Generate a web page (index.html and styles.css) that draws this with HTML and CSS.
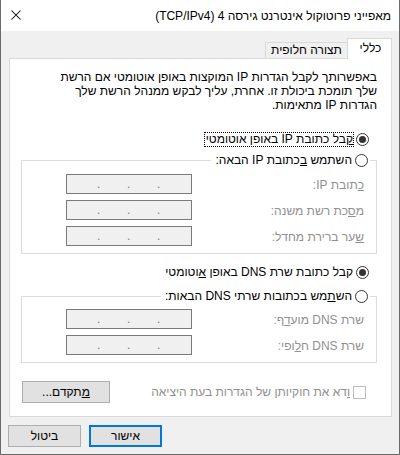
FILE: index.html
```html
<!DOCTYPE html>
<html lang="he" dir="rtl">
<head>
<meta charset="utf-8">
<title>TCP/IPv4</title>
<link rel="stylesheet" href="styles.css">
</head>
<body>
<div class="window">
  <div class="titlebar">
    <span class="title">מאפייני פרוטוקול אינטרנט גירסה 4 (TCP/IPv4)</span>
    <svg class="close" width="10" height="10" viewBox="0 0 10 10" aria-hidden="true"><path d="M0.5 0.5L9.5 9.5M9.5 0.5L0.5 9.5" stroke="#000" stroke-width="1.05" fill="none"/></svg>
  </div>
  <div class="tabs">
    <div class="tab active">כללי</div>
    <div class="tab">תצורה חלופית</div>
  </div>
  <div class="panel">
    <p class="intro">באפשרותך לקבל הגדרות IP המוקצות באופן אוטומטי אם הרשת<br>שלך תומכת ביכולת זו. אחרת, עליך לבקש ממנהל הרשת שלך<br>הגדרות IP מתאימות.</p>

    <div class="radio-row first">
      <span class="radio checked"></span>
      <span class="lbl focus"><u>ק</u>בל כתובת IP באופן אוטומטי</span>
    </div>

    <fieldset class="group ip-group">
      <legend>
        <span class="radio"></span>
        <span class="lbl">השתמש <u>ב</u>כתובת IP הבאה:</span>
      </legend>
      <div class="field-row">
        <span class="flabel"><u>כ</u>תובת IP:</span>
        <span class="ipbox"><span>.</span><span>.</span><span>.</span></span>
      </div>
      <div class="field-row">
        <span class="flabel">מ<u>ס</u>כת רשת משנה:</span>
        <span class="ipbox"><span>.</span><span>.</span><span>.</span></span>
      </div>
      <div class="field-row">
        <span class="flabel"><u>ש</u>ער ברירת מחדל:</span>
        <span class="ipbox"><span>.</span><span>.</span><span>.</span></span>
      </div>
    </fieldset>

    <div class="radio-row dns-auto">
      <span class="radio checked"></span>
      <span class="lbl">קבל כתובת שרת DNS באופן <u>א</u>וטומטי</span>
    </div>

    <fieldset class="group dns-group">
      <legend>
        <span class="radio"></span>
        <span class="lbl">הש<u>ת</u>מש בכתובות שרתי DNS הבאות:</span>
      </legend>
      <div class="field-row">
        <span class="flabel">שרת DNS מוע<u>ד</u>ף:</span>
        <span class="ipbox"><span>.</span><span>.</span><span>.</span></span>
      </div>
      <div class="field-row">
        <span class="flabel">שרת DNS ח<u>ל</u>ופי:</span>
        <span class="ipbox"><span>.</span><span>.</span><span>.</span></span>
      </div>
    </fieldset>

    <div class="bottom-row">
      <span class="check-wrap">
        <span class="checkbox"></span>
        <span class="check-lbl"><u>ו</u>דא את חוקיותן של הגדרות בעת היציאה</span>
      </span>
      <button class="btn adv"><u>מ</u>תקדם...</button>
    </div>
  </div>
  <div class="buttons">
    <button class="btn default">אישור</button>
    <button class="btn">ביטול</button>
  </div>
</div>
</body>
</html>
```

FILE: styles.css
```css
* { box-sizing: border-box; }

html, body {
  margin: 0;
  padding: 0;
}

body {
  width: 400px;
  height: 455px;
  overflow: hidden;
  font-family: "Liberation Sans", "DejaVu Sans", Arial, sans-serif;
  font-size: 12px;
  color: #000;
  background: #f0f0f0;
}

.window {
  width: 400px;
  height: 455px;
  direction: rtl;
  background: #f0f0f0;
  border: 1px solid #6b6b6b;
  border-top: none;
  display: flex;
  flex-direction: column;
}

.titlebar {
  height: 31px;
  background: #fff;
  display: flex;
  align-items: center;
  justify-content: space-between;
  padding: 0 8px 0 10px;
  flex: none;
}

.title {
  font-size: 12px;
  line-height: 16px;
  padding-top: 1px;
}

.close {
  display: block;
  margin-top: -1px;
}

.tabs {
  display: flex;
  align-items: flex-end;
  height: 20px;
  margin-top: 7px;
  padding-right: 7px;
  position: relative;
  z-index: 1;
  flex: none;
}

.tab {
  height: 16px;
  width: 82px;
  border: 1px solid #d9d9d9;
  border-bottom: none;
  border-right: none;
  background: #f0f0f0;
  text-align: center;
  line-height: 15px;
}

.tab.active {
  height: 21px;
  width: 45px;
  margin-bottom: -1px;
  background: #fff;
  border-right: 1px solid #d9d9d9;
  line-height: 19px;
  padding-left: 2px;
}

.panel {
  height: 359px;
  margin: 0 7px 0 8px;
  background: #fff;
  border: 1px solid #d9d9d9;
  padding: 11px 14px 0 0;
  display: flex;
  flex-direction: column;
  flex: none;
}

.intro {
  margin: 0;
  line-height: 14px;
}

.radio-row {
  display: flex;
  align-items: center;
  height: 16px;
  padding-right: 8px;
}

.radio-row.first { margin-top: 19px; }
.radio-row.dns-auto { margin-top: 10px; }

.radio {
  width: 13px;
  height: 13px;
  flex: none;
  border: 1px solid #333;
  border-radius: 50%;
  background: #fff;
  display: flex;
  align-items: center;
  justify-content: center;
  margin-left: 2px;
}

.radio.checked::after {
  content: "";
  width: 7px;
  height: 7px;
  border-radius: 50%;
  background: #333;
}

.lbl {
  border: 1px dotted transparent;
  line-height: 13px;
  padding: 0 0 0 1px;
}

.lbl.focus {
  border-color: #000;
}

.group {
  margin: 5px 0 0 11px;
  padding: 0 0 7px 0;
  border: 1px solid #dcdcdc;
  min-width: 0;
}

.dns-group { margin-top: 8px; }

.group legend {
  display: flex;
  align-items: center;
  height: 16px;
  padding: 0 2px;
  margin-right: 6px;
}

.field-row {
  display: flex;
  justify-content: space-between;
  align-items: center;
  height: 20px;
  margin-top: 6px;
  padding: 0 12px 0 44px;
  color: #8f8f8f;
}

.ip-group .field-row:first-of-type { margin-top: 6px; }
.dns-group .field-row:first-of-type { margin-top: 5px; }

.flabel {
  line-height: 14px;
  margin-top: 1px;
}

.ipbox {
  direction: ltr;
  width: 126px;
  height: 20px;
  border: 1px solid #7a7a7a;
  background: #f0f0f0;
  display: flex;
  padding-left: 30px;
  line-height: 18px;
  color: #7c7c7c;
}

.ipbox span {
  width: 30px;
  text-align: left;
}

.bottom-row {
  display: flex;
  align-items: center;
  justify-content: space-between;
  margin-top: 18px;
  height: 22px;
  padding-right: 11px;
  padding-left: 12px;
}

.check-wrap {
  display: flex;
  align-items: center;
  color: #8f8f8f;
}

.checkbox {
  width: 13px;
  height: 13px;
  border: 1px solid #bcbcbc;
  background: #fff;
  margin-left: 3px;
  flex: none;
}

.check-lbl {
  line-height: 14px;
}

.btn {
  font-family: inherit;
  font-size: 12px;
  color: #000;
  background: #e1e1e1;
  border: 1px solid #adadad;
  height: 22px;
  padding: 0;
  margin: 0;
  line-height: 18px;
  direction: rtl;
}

.btn.adv {
  width: 88px;
}

.buttons {
  display: flex;
  justify-content: flex-end;
  gap: 8px;
  margin-top: 8px;
  padding-left: 7px;
  flex: none;
}

.buttons .btn {
  width: 73px;
}

.btn.default {
  border: 2px solid #0078d7;
}
```
